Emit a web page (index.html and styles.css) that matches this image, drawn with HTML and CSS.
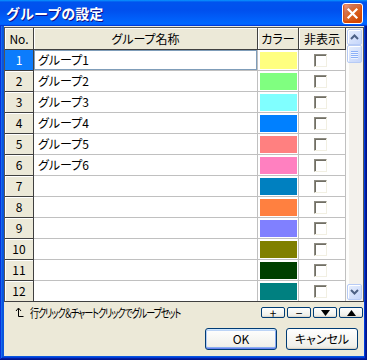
FILE: index.html
```html
<!DOCTYPE html>
<html lang="ja">
<head>
<meta charset="utf-8">
<title>グループの設定</title>
<link rel="stylesheet" href="styles.css">
</head>
<body>
<div class="window">
  <div class="titlebar">
    <span class="title">グループの設定</span>
    <div class="close"><svg width="13" height="13" viewBox="0 0 13 13"><path d="M2.5 2.5 L10.5 10.5 M10.5 2.5 L2.5 10.5" stroke="#fff" stroke-width="2.2" stroke-linecap="square"/></svg></div>
  </div>
  <div class="body">
    <div class="gridbox">
      <div class="tbl">
        <div class="row head">
          <div class="c rh">No.</div><div class="c name">グループ名称</div><div class="c color">カラー</div><div class="c chk">非表示</div>
        </div>
        <div class="row sel">
          <div class="c rh">1</div><div class="c name focus">グループ1</div><div class="c color"><span class="sw" style="background:#ffff80"></span></div><div class="c chk"><span class="cb"></span></div>
        </div>
        <div class="row">
          <div class="c rh">2</div><div class="c name">グループ2</div><div class="c color"><span class="sw" style="background:#80ff80"></span></div><div class="c chk"><span class="cb"></span></div>
        </div>
        <div class="row">
          <div class="c rh">3</div><div class="c name">グループ3</div><div class="c color"><span class="sw" style="background:#80ffff"></span></div><div class="c chk"><span class="cb"></span></div>
        </div>
        <div class="row">
          <div class="c rh">4</div><div class="c name">グループ4</div><div class="c color"><span class="sw" style="background:#0080ff"></span></div><div class="c chk"><span class="cb"></span></div>
        </div>
        <div class="row">
          <div class="c rh">5</div><div class="c name">グループ5</div><div class="c color"><span class="sw" style="background:#ff8080"></span></div><div class="c chk"><span class="cb"></span></div>
        </div>
        <div class="row">
          <div class="c rh">6</div><div class="c name">グループ6</div><div class="c color"><span class="sw" style="background:#ff80c0"></span></div><div class="c chk"><span class="cb"></span></div>
        </div>
        <div class="row">
          <div class="c rh">7</div><div class="c name"></div><div class="c color"><span class="sw" style="background:#0080c0"></span></div><div class="c chk"><span class="cb"></span></div>
        </div>
        <div class="row">
          <div class="c rh">8</div><div class="c name"></div><div class="c color"><span class="sw" style="background:#ff8040"></span></div><div class="c chk"><span class="cb"></span></div>
        </div>
        <div class="row">
          <div class="c rh">9</div><div class="c name"></div><div class="c color"><span class="sw" style="background:#8080ff"></span></div><div class="c chk"><span class="cb"></span></div>
        </div>
        <div class="row">
          <div class="c rh">10</div><div class="c name"></div><div class="c color"><span class="sw" style="background:#808000"></span></div><div class="c chk"><span class="cb"></span></div>
        </div>
        <div class="row">
          <div class="c rh">11</div><div class="c name"></div><div class="c color"><span class="sw" style="background:#004000"></span></div><div class="c chk"><span class="cb"></span></div>
        </div>
        <div class="row">
          <div class="c rh">12</div><div class="c name"></div><div class="c color"><span class="sw" style="background:#008080"></span></div><div class="c chk"><span class="cb"></span></div>
        </div>
      </div>
      <div class="vscroll">
        <div class="sbtn"><svg width="9" height="6" viewBox="0 0 9 6"><path d="M1 5 L4.5 1.5 L8 5" fill="none" stroke="#4d6185" stroke-width="2"/></svg></div>
        <div class="thumb"><span></span><span></span><span></span><span></span></div>
        <div class="track"></div>
        <div class="sbtn"><svg width="9" height="6" viewBox="0 0 9 6"><path d="M1 1 L4.5 4.5 L8 1" fill="none" stroke="#4d6185" stroke-width="2"/></svg></div>
      </div>
    </div>
    <div class="hintrow">
      <div class="hint">
        <svg class="harrow" width="9" height="11" viewBox="0 0 9 11"><path d="M3.5 1.5 V9.5 H8.5 M1 4 L3.5 1 L6 4" fill="none" stroke="#000" stroke-width="1"/></svg>
        <span class="htext">行クリック＆チャートクリックでグループセット</span>
      </div>
      <div class="smallbtns">
        <div class="sb">+</div>
        <div class="sb">−</div>
        <div class="sb"><svg width="9" height="6" viewBox="0 0 9 6"><path d="M0 0 H9 L4.5 6 Z" fill="#000"/></svg></div>
        <div class="sb"><svg width="9" height="6" viewBox="0 0 9 6"><path d="M0 6 H9 L4.5 0 Z" fill="#000"/></svg></div>
      </div>
    </div>
    <div class="btnrow">
      <div class="btn default">OK</div>
      <div class="btn">キャンセル</div>
    </div>
  </div>
</div>
</body>
</html>
```
FILE: styles.css
```css
* { box-sizing: border-box; margin: 0; padding: 0; }
html, body { width: 367px; height: 360px; overflow: hidden; background: #fff; }
body {
  font-family: "Noto Sans CJK JP", "Noto Sans", sans-serif;
  font-size: 12px;
  font-feature-settings: "palt";
  color: #000;
  line-height: 1;
}
.window {
  width: 367px;
  height: 360px;
  display: flex;
  flex-direction: column;
  background: #0855dd;
  box-shadow: inset -1px -1px #00138c, inset 1px 1px #0831d9, inset -2px -2px #001ea0, inset 2px 2px #166aee, inset -3px -3px #003bda, inset 3px 3px #0855dd;
}
.titlebar {
  height: 26px;
  flex: none;
  display: flex;
  align-items: center;
  justify-content: space-between;
  padding: 0 4px 0 6px;
  background: linear-gradient(180deg, #0997ff, #0053ee 8%, #0050ee 40%, #0066ff 88%, #0066ff 93%, #005bff 95%, #003dd7 96%, #003dd7);
}
.title {
  color: #fff;
  font-weight: bold;
  font-size: 14px;
  font-feature-settings: normal;
  text-shadow: 1px 1px #0f1089;
}
.close {
  width: 21px;
  height: 21px;
  border: 1px solid #fff;
  border-radius: 3px;
  background: radial-gradient(circle at 90% 90%, #cc4600 0, #dc6527 55%, #cd7556 70%, #f29b7e 90%);
  box-shadow: inset 0 -1px 2px 1px #da4600;
  display: flex;
  align-items: center;
  justify-content: center;
}
.body {
  flex: 1;
  margin: 0 3px 4px 4px;
  padding-top: 1px;
  background: #ece9d8;
  display: flex;
  flex-direction: column;
}
.gridbox {
  display: flex;
  height: 275px;
  border: 1px solid #555;
  border-bottom: 1px solid #404040;
}
.tbl {
  width: 341px;
  display: flex;
  flex-direction: column;
}
.row { display: flex; height: 21px; flex: none; }
.row.head { height: 22px; }
.row:last-child { height: 20px; }
.c {
  display: flex;
  align-items: center;
  background: #fff;
  border-right: 1px solid #c0c0c0;
  border-bottom: 1px solid #c0c0c0;
}
.row:last-child .c { border-bottom: 0; }
.rh {
  width: 29px;
  justify-content: center;
  background: #ece9d8;
  border-right-color: #404040;
  border-bottom-color: #404040;
  box-shadow: inset 1px 1px #fff;
}
.name { width: 224px; padding-left: 4px; }
.color { width: 41px; padding: 2px 1px 1px 2px; }
.chk { width: 47px; justify-content: center; padding-right: 3px; }
.head .c {
  background: #ece9d8;
  border-right-color: #404040;
  border-bottom-color: #404040;
  box-shadow: inset 1px 1px #fff;
  justify-content: center;
  padding: 0;
}
.sel .rh { background: #0c7cfc; color: #fff; box-shadow: none; }
.focus { box-shadow: inset 0 0 0 1px #7f9db9; }
.sw { display: block; width: 100%; height: 100%; }
.cb {
  display: block;
  width: 13px;
  height: 13px;
  background: #fff;
  border: 1px solid;
  border-color: #8d8b82 #f1efe2 #f1efe2 #8d8b82;
  box-shadow: inset 1px 1px #716f64;
}
.vscroll {
  width: 17px;
  display: flex;
  flex-direction: column;
  padding: 1px;
  background: linear-gradient(90deg, #fdfdfb 0 3px, #f3f1ec 3px);
}
.sbtn, .thumb {
  width: 15px;
  flex: none;
  border: 1px solid #b7cbf5;
  border-radius: 2px;
  background: linear-gradient(135deg, #e6eefc, #c6d6fb);
  box-shadow: inset 1px 1px #fff;
  display: flex;
  align-items: center;
  justify-content: center;
}
.sbtn { height: 16px; }
.thumb { height: 18px; flex-direction: column; gap: 1px; }
.thumb span { display: block; width: 7px; height: 1px; background: #8cb0f8; box-shadow: 0 1px #eef4fe; }
.track { flex: 1; }
.hintrow {
  display: flex;
  justify-content: space-between;
  align-items: center;
  margin-top: 5px;
  height: 11px;
  padding: 0 1px 0 11px;
}
.hint { display: flex; align-items: center; gap: 6px; }
.htext {
  display: inline-block;
  font-size: 12px;
  letter-spacing: -1.5px;
  transform: scaleX(0.76);
  transform-origin: left center;
}
.smallbtns { display: flex; gap: 2px; }
.sb {
  width: 24px;
  height: 11px;
  border: 1px solid #003c74;
  border-radius: 2px;
  background: linear-gradient(180deg, #fff, #f0f0ea 80%, #d6d0c5);
  display: flex;
  align-items: center;
  justify-content: center;
  font-size: 12px;
}
.btnrow {
  display: flex;
  justify-content: flex-end;
  gap: 9px;
  margin-top: 10px;
  padding-right: 6px;
}
.btn {
  width: 72px;
  height: 22px;
  border: 1px solid #003c74;
  border-radius: 3px;
  background: linear-gradient(180deg, #fff, #f0f0ea 85%, #e3e1d6);
  box-shadow: inset 0 -1px #d6d0c5;
  display: flex;
  align-items: center;
  justify-content: center;
  font-size: 12px;
}
.btn.default {
  box-shadow: inset 0 1px #cee7ff, inset 0 -1px #6982ee, inset 1px 0 #b2cbf5, inset -1px 0 #8aaaf0, inset 0 2px #bcd4f6, inset 0 -2px #89adf0;
}
```
